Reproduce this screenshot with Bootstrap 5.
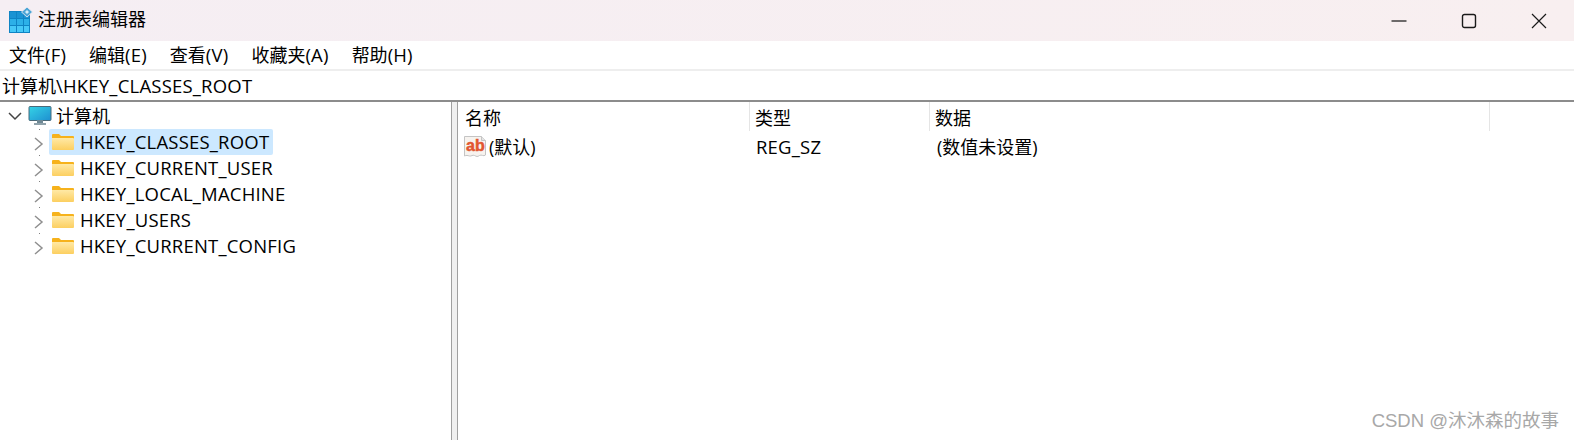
<!DOCTYPE html>
<html lang="zh-CN">

<head>
    <meta charset="UTF-8">
    <title>注册表编辑器</title>
    <link href="https://cdn.jsdelivr.net/npm/bootstrap@5.3.0/dist/css/bootstrap.min.css" rel="stylesheet">
    <style>
        html, body { height: 440px; overflow: hidden; }
        body { font-family: "Open Sans", "Noto Sans CJK SC", sans-serif; font-size: 18px; color: #000; background: #fff; }
        .reg-window { height: 440px; position: relative; }
        .reg-title { height: 41px; padding-bottom: 2px; background: linear-gradient(90deg, #f5eef3, #f8eff0); }
        .reg-title-icon { margin-left: 9px; }
        .reg-title-text { font-size: 18px; margin-left: 5px; }
        .reg-win-btn { width: 70px; height: 41px; margin-top: 2px; }
        .reg-menu { height: 28px; padding-left: 9px; gap: 23px; line-height: 28px; }
        .reg-strip { height: 2px; background: #eeeeee; }
        .reg-address { height: 29px; line-height: 30px; padding-left: 2px; }
        .reg-divider { height: 2px; background: #8c8c8c; }
        .reg-latin { font-size: 18.5px; letter-spacing: .2px; }
        .reg-tree { width: 451px; padding-top: 1px; }
        .reg-tree-rows { background: linear-gradient(#808080 1px, transparent 1px) 39px 0 / 1px 26px repeat-y; }
        .reg-splitter { width: 7px; background: #f0f0f0; border-left: 1px solid #a0a0a0; border-right: 1px solid #a0a0a0; }
        .reg-row { height: 26px; line-height: 26px; white-space: nowrap; }
        .reg-chevron { width: 14px; margin: 4px 3px 0 32px; }
        .reg-down { margin-left: 8px; }
        .reg-computer { margin-left: 6px; }
        .reg-node { height: 26px; padding: 0 4px 0 3px; border-radius: 2px; }
        .reg-node.active { background: #cce8ff; }
        .reg-node-label { margin-left: 6px; }
        .reg-computer-label { margin-left: 4px; }
        .reg-head { height: 31px; line-height: 33px; }
        .reg-col-name { width: 292px; padding-left: 7px; }
        .reg-col-type { width: 180px; padding-left: 5px; }
        .reg-col-data { width: 560px; padding-left: 5px; }
        .reg-head > div { height: 29px; border-right: 1px solid #e5e5e5; }
        .reg-value { height: 26px; line-height: 26px; margin-top: 1px; }
        .reg-value-name { width: 292px; padding-left: 5px; }
        .reg-value-type { width: 180px; padding-left: 6px; }
        .reg-value-data { padding-left: 7px; }
        .reg-value-label { margin-left: 2px; }
        .reg-mark { position: absolute; right: 15px; bottom: 5px; font-size: 18.5px; color: #a8a8a8; font-family: "Liberation Sans", "Noto Sans CJK SC", sans-serif; }
    </style>
</head>

<body>
    <svg width="0" height="0" class="position-absolute">
        <defs>
            <linearGradient id="folderFill" x1="0" y1="0" x2="0" y2="1">
                <stop offset="0" stop-color="#ffe9a6" />
                <stop offset="1" stop-color="#fccf60" />
            </linearGradient>
            <linearGradient id="screenFill" x1="0" y1="0" x2="1" y2="1">
                <stop offset="0" stop-color="#35d3e6" />
                <stop offset="1" stop-color="#1e8fd0" />
            </linearGradient>
            <symbol id="folder" viewBox="0 0 22 18">
                <path d="M0 2a1 1 0 0 1 1-1h6l2 2h12a1 1 0 0 1 1 1v2H0z" fill="#f6b21c" />
                <path d="M0 5h21a1 1 0 0 1 1 1v10a1 1 0 0 1-1 1H1a1 1 0 0 1-1-1z" fill="url(#folderFill)" />
            </symbol>
            <symbol id="chevRight" viewBox="0 0 14 14">
                <path d="M3 1 10 7l-7 6" fill="none" stroke="#8f8f8f" stroke-width="1.500" />
            </symbol>
        </defs>
    </svg>

    <div class="reg-window d-flex flex-column">
        <!-- title bar -->
        <div class="reg-title d-flex align-items-center flex-shrink-0">
            <svg class="reg-title-icon" width="24" height="26" viewBox="0 0 24 26">
                <path d="M0 4h21v22H0z" fill="#0f84c4" />
                <path d="M1 5h6v6H1zM8 5h6v6H8zM15 5h5v6h-5z" fill="#1a93d3" />
                <path d="M1 12h6v6H1zM8 12h6v6H8zM15 12h5v6h-5z" fill="#2cb0e8" />
                <path d="M1 19h6v6H1zM8 19h6v6H8zM15 19h5v6h-5z" fill="#45c8f7" />
                <path d="M18 0l5.500 5-5.500 5-5.500-5z" fill="#4da6d6" stroke="#f7eff2" stroke-width=".8" />
                <path d="M18 3l2 2-2 2-2-2z" fill="#d5eefa" />
            </svg>
            <span class="reg-title-text">注册表编辑器</span>
            <div class="ms-auto d-flex">
                <div class="reg-win-btn d-flex align-items-center justify-content-center">
                    <svg width="16" height="16" viewBox="0 0 16 16"><path d="M0.500 8h15" stroke="#111" stroke-width="1.200" /></svg>
                </div>
                <div class="reg-win-btn d-flex align-items-center justify-content-center">
                    <svg width="16" height="16" viewBox="0 0 16 16"><rect x="1.500" y="1.500" width="13" height="13" rx="2" fill="none" stroke="#1a1a1a" stroke-width="1.400" /></svg>
                </div>
                <div class="reg-win-btn d-flex align-items-center justify-content-center">
                    <svg width="16" height="16" viewBox="0 0 16 16"><path d="M1 1l14 14M15 1 1 15" stroke="#1a1a1a" stroke-width="1.200" /></svg>
                </div>
            </div>
        </div>

        <!-- menu -->
        <div class="reg-menu d-flex flex-shrink-0">
            <span>文件<span class="reg-latin">(F)</span></span>
            <span>编辑<span class="reg-latin">(E)</span></span>
            <span>查看<span class="reg-latin">(V)</span></span>
            <span>收藏夹<span class="reg-latin">(A)</span></span>
            <span>帮助<span class="reg-latin">(H)</span></span>
        </div>
        <div class="reg-strip flex-shrink-0"></div>
        <div class="reg-address flex-shrink-0">计算机<span class="reg-latin">\HKEY_CLASSES_ROOT</span></div>
        <div class="reg-divider flex-shrink-0"></div>

        <div class="d-flex flex-grow-1">
            <!-- tree -->
            <div class="reg-tree flex-shrink-0">
                <div class="reg-row d-flex align-items-center">
                    <svg class="reg-down" width="14" height="14" viewBox="0 0 14 14"><path d="M1 4l6 6 6-6" fill="none" stroke="#444" stroke-width="1.500" /></svg>
                    <svg class="reg-computer" width="24" height="20" viewBox="0 0 24 20">
                        <rect x="1" y="0.500" width="22" height="14" rx="1" fill="url(#screenFill)" stroke="#4a6a7a" stroke-width="1" />
                        <path d="M9 14h6v3H9z" fill="#6f8894" />
                        <path d="M6 17h12v2H6z" fill="#8fa2ab" />
                    </svg>
                    <span class="reg-computer-label">计算机</span>
                </div>
                <div id="treeRows" class="reg-tree-rows"></div>
            </div>

            <div class="reg-splitter flex-shrink-0"></div>

            <!-- values -->
            <div class="flex-grow-1">
                <div class="reg-head d-flex">
                    <div class="reg-col-name">名称</div>
                    <div class="reg-col-type">类型</div>
                    <div class="reg-col-data">数据</div>
                </div>
                <div class="reg-value d-flex align-items-center">
                    <div class="reg-value-name d-flex align-items-center">
                        <svg width="24" height="24" viewBox="0 0 24 24">
                            <path d="M1.500 1.500h17l4 4V20c-2 2-4-1-6 .5s-3 1-5 0-3 1-5 .5-3-1-5 0z" fill="#f7f3ef" stroke="#c4c4c4" />
                            <path d="M18.500 1.500v4h4" fill="#e4e4e4" stroke="#c4c4c4" />
                            <text x="3" y="16" font-family="Liberation Sans, sans-serif" font-size="16" font-weight="700" fill="#e2562f" stroke="#e2562f" stroke-width=".5">ab</text>
                        </svg>
                        <span class="reg-value-label">(默认)</span>
                    </div>
                    <div class="reg-value-type reg-latin">REG_SZ</div>
                    <div class="reg-value-data">(数值未设置)</div>
                </div>
            </div>
        </div>

        <div class="reg-mark">CSDN @沐沐森的故事</div>
    </div>

    <script src="https://cdn.jsdelivr.net/npm/bootstrap@5.3.0/dist/js/bootstrap.bundle.min.js"></script>
    <script>
        const hives = ['HKEY_CLASSES_ROOT', 'HKEY_CURRENT_USER', 'HKEY_LOCAL_MACHINE', 'HKEY_USERS', 'HKEY_CURRENT_CONFIG'];
        document.getElementById('treeRows').innerHTML = hives.map((name, i) => `
            <div class="reg-row d-flex align-items-center">
                <svg class="reg-chevron" width="14" height="14"><use href="#chevRight" /></svg>
                <div class="reg-node d-flex align-items-center ${i === 0 ? 'active' : ''}">
                    <svg width="22" height="18"><use href="#folder" /></svg>
                    <span class="reg-node-label reg-latin">${name}</span>
                </div>
            </div>`).join('');
    </script>
</body>

</html>
